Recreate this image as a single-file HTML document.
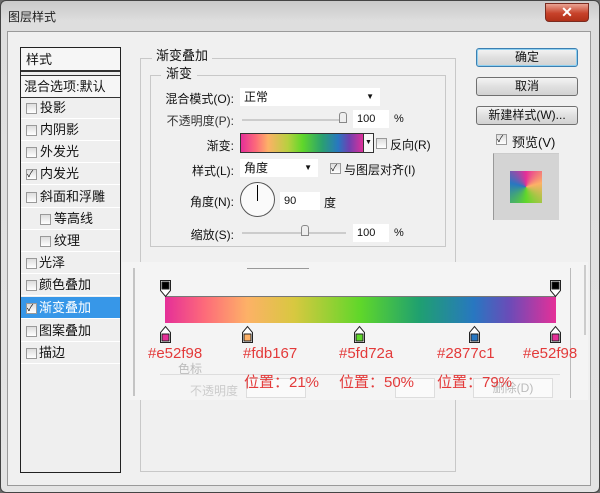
<!DOCTYPE html><html><head><meta charset="utf-8"><style>
*{margin:0;padding:0;box-sizing:border-box}
body{width:600px;height:493px;overflow:hidden;background:#6a6a6a;font-family:"Liberation Sans","Noto Sans CJK SC",sans-serif;font-size:12px;color:#111;position:relative}
.a{position:absolute}
.cb{position:absolute;width:11px;height:11px;border:1px solid #999;background:linear-gradient(#ddd,#fff)}
.btn{position:absolute;left:476px;width:102px;height:19px;border:1px solid #707070;border-radius:3px;background:linear-gradient(#f4f4f4,#e0e0e0 50%,#d2d2d2);text-align:center;line-height:17px;font-size:12px}
.row{position:absolute;left:21px;width:99px;height:22px;border-bottom:1px solid #fff;line-height:22px;font-size:13px}
.field{position:absolute;background:#fff;height:18px;line-height:18px;padding-left:4px;font-size:11px}
.lbl{position:absolute;text-align:right;font-size:12px}
.red{position:absolute;color:#e33a3a;font-size:15px;font-family:"Liberation Sans","Noto Sans CJK SC",sans-serif}
</style></head><body>
<div class="a" style="left:0;top:0;width:600px;height:493px;border-radius:6px;background:linear-gradient(#c9c9c9,#dedede 20px,#e4e4e4);border:1px solid #444"></div>
<div class="a" style="left:8px;top:8px;font-size:12px;color:#222">图层样式</div>
<div class="a" style="left:545px;top:3px;width:44px;height:19px;border-radius:0 0 4px 4px;background:linear-gradient(#e9a393,#c7422a 55%,#b03018);border:1px solid #7a2b20;color:#fff;text-align:center;font-weight:bold;line-height:17px;font-size:14px">✕</div>
<div class="a" style="left:7px;top:31px;width:584px;height:455px;background:#f0f0f0;border:1px solid #9a9a9a"></div>
<!-- left list -->
<div class="a" style="left:20px;top:47px;width:101px;height:426px;border:1px solid #222;background:#efefef"></div>
<div class="a" style="left:21px;top:48px;width:99px;height:24px;border-bottom:2px solid #333;background:#f6f6f6;line-height:23px;padding-left:5px;font-size:13px">样式</div>
<div class="a" style="left:21px;top:75px;width:99px;height:23px;border-bottom:1px solid #333;border-top:1px solid #333;background:#f6f6f6;line-height:22px;padding-left:3px;font-size:13px">混合选项:默认</div>
<div class="row" style="top:97px"><span class="cb" style="left:5px;top:6px"></span><span style="position:absolute;left:19px">投影</span></div>
<div class="row" style="top:119px"><span class="cb" style="left:5px;top:6px"></span><span style="position:absolute;left:19px">内阴影</span></div>
<div class="row" style="top:141px"><span class="cb" style="left:5px;top:6px"></span><span style="position:absolute;left:19px">外发光</span></div>
<div class="row" style="top:163px"><span class="cb" style="left:5px;top:6px;font-size:9px;line-height:9px">✓</span><span style="position:absolute;left:19px">内发光</span></div>
<div class="row" style="top:186px"><span class="cb" style="left:5px;top:6px"></span><span style="position:absolute;left:19px">斜面和浮雕</span></div>
<div class="row" style="top:208px"><span class="cb" style="left:19px;top:6px"></span><span style="position:absolute;left:33px">等高线</span></div>
<div class="row" style="top:230px"><span class="cb" style="left:19px;top:6px"></span><span style="position:absolute;left:33px">纹理</span></div>
<div class="row" style="top:252px"><span class="cb" style="left:5px;top:6px"></span><span style="position:absolute;left:18px">光泽</span></div>
<div class="row" style="top:274px"><span class="cb" style="left:5px;top:6px"></span><span style="position:absolute;left:18px">颜色叠加</span></div>
<div class="row" style="top:297px;background:#3797e8;color:#fff"><span class="cb" style="left:5px;top:6px;font-size:9px;line-height:9px;color:#000">✓</span><span style="position:absolute;left:18px">渐变叠加</span></div>
<div class="row" style="top:320px"><span class="cb" style="left:5px;top:6px"></span><span style="position:absolute;left:18px">图案叠加</span></div>
<div class="row" style="top:342px"><span class="cb" style="left:5px;top:6px"></span><span style="position:absolute;left:18px">描边</span></div>
<!-- group boxes -->
<div class="a" style="left:140px;top:58px;width:316px;height:414px;border:1px solid #c8c8c8"></div>
<div class="a" style="left:152px;top:45px;background:#f0f0f0;padding:0 4px;font-size:13px">渐变叠加</div>
<div class="a" style="left:150px;top:75px;width:296px;height:172px;border:1px solid #c8c8c8"></div>
<div class="a" style="left:161px;top:63px;background:#f0f0f0;padding:0 5px;font-size:13px">渐变</div>
<div class="lbl" style="left:150px;top:90px;width:84px">混合模式(O):</div>
<div class="field" style="left:240px;top:88px;width:140px;font-size:12px">正常<span style="position:absolute;right:6px;top:0;font-size:8px">▼</span></div>
<div class="lbl" style="left:150px;top:112px;width:84px;color:#333">不透明度(P):</div>
<div class="a" style="left:242px;top:119px;width:104px;height:2px;background:#ccc"></div>
<div class="a" style="left:339px;top:112px;width:8px;height:11px;border:1px solid #888;border-radius:3px 3px 0 0;background:#eee"></div>
<div class="field" style="left:353px;top:110px;width:36px">100</div><div class="a" style="left:394px;top:113px;font-size:11px">%</div>
<div class="lbl" style="left:150px;top:137px;width:84px">渐变:</div>
<div class="a" style="left:240px;top:133px;width:125px;height:20px;border:1px solid #333;background:linear-gradient(90deg,#e52f98,#fd6a7a 12%,#fdb167 22%,#b8d040 38%,#5fd72a 50%,#2aa070 66%,#2877c1 79%,#7040b0 88%,#e52f98)"></div>
<div class="a" style="left:363px;top:133px;width:11px;height:20px;border:1px solid #333;background:#f8f8f8;font-size:7px;text-align:center;line-height:18px">▼</div>
<div class="cb" style="left:376px;top:138px"></div><div class="a" style="left:390px;top:136px">反向(R)</div>
<div class="lbl" style="left:150px;top:162px;width:84px">样式(L):</div>
<div class="field" style="left:240px;top:159px;width:78px;font-size:12px">角度<span style="position:absolute;right:6px;top:0;font-size:8px">▼</span></div>
<div class="cb" style="left:330px;top:163px;font-size:9px;line-height:9px">✓</div><div class="a" style="left:344px;top:161px">与图层对齐(I)</div>
<div class="lbl" style="left:150px;top:193px;width:84px">角度(N):</div>
<div class="a" style="left:240px;top:182px;width:35px;height:35px;border-radius:50%;border:1px solid #555;background:#fafafa"></div>
<div class="a" style="left:257px;top:185px;width:1px;height:16px;background:#000"></div>
<div class="field" style="left:280px;top:192px;width:40px">90</div><div class="a" style="left:324px;top:194px">度</div>
<div class="lbl" style="left:150px;top:226px;width:84px">缩放(S):</div>
<div class="a" style="left:242px;top:232px;width:104px;height:2px;background:#ccc"></div>
<div class="a" style="left:301px;top:225px;width:8px;height:11px;border:1px solid #888;border-radius:3px 3px 0 0;background:#eee"></div>
<div class="field" style="left:353px;top:224px;width:36px">100</div><div class="a" style="left:394px;top:227px;font-size:11px">%</div>
<!-- right buttons -->
<div class="btn" style="top:48px;border-color:#3c7fb1;box-shadow:0 0 0 1px #8fd0f0 inset">确定</div>
<div class="btn" style="top:77px">取消</div>
<div class="btn" style="top:106px">新建样式(W)...</div>
<div class="cb" style="left:496px;top:134px;font-size:9px;line-height:9px">✓</div><div class="a" style="left:512px;top:132px;font-size:13px">预览(V)</div>
<div class="a" style="left:493px;top:153px;width:66px;height:67px;background:#d4d4d4;border-left:1px solid #999;border-top:1px solid #ccc"></div>
<div class="a" style="left:510px;top:171px;width:32px;height:32px;background:conic-gradient(from 0deg,#e52f98,#fdb167 21%,#5fd72a 50%,#2877c1 79%,#e52f98)"></div>
<!-- overlay editor -->
<div class="a" style="left:122px;top:262px;width:466px;height:138px;background:#f4f4f4"></div>
<div class="a" style="left:133px;top:268px;width:2px;height:128px;background:#c4c4c4"></div>
<div class="a" style="left:570px;top:268px;width:1px;height:130px;background:#bbb"></div>
<div class="a" style="left:584px;top:265px;width:2px;height:70px;background:#ccc"></div>
<div class="a" style="left:247px;top:268px;width:62px;height:1px;background:#999"></div>
<div class="a" style="left:165px;top:296px;width:391px;height:27px;border-top:1px solid #777;background:linear-gradient(90deg,#e52f98,#fd6a7a 10%,#fdb167 21%,#d8c840 33%,#5fd72a 50%,#1fa070 65%,#2877c1 79%,#6a4cb8 88%,#e52f98)"></div>
<svg class="a" style="left:0;top:0" width="600" height="493">
<g stroke="#222" stroke-width="1">
<path d="M160.5 280.5h10v10l-5 6l-5-6z" fill="#fff"/><rect x="162" y="282" width="7" height="7" fill="#000"/>
<path d="M550.5 280.5h10v10l-5 6l-5-6z" fill="#fff"/><rect x="552" y="282" width="7" height="7" fill="#000"/>
<path d="M160.5 342.5v-10l5-6l5 6v10z" fill="#fff"/><rect x="162" y="334" width="7" height="7" fill="#e52f98"/>
<path d="M242.5 342.5v-10l5-6l5 6v10z" fill="#fff"/><rect x="244" y="334" width="7" height="7" fill="#fdb167"/>
<path d="M354.5 342.5v-10l5-6l5 6v10z" fill="#fff"/><rect x="356" y="334" width="7" height="7" fill="#5fd72a"/>
<path d="M469.5 342.5v-10l5-6l5 6v10z" fill="#fff"/><rect x="471" y="334" width="7" height="7" fill="#2877c1"/>
<path d="M550.5 342.5v-10l5-6l5 6v10z" fill="#fff"/><rect x="552" y="334" width="7" height="7" fill="#e52f98"/>
</g></svg>
<div class="a" style="left:178px;top:360px;color:#bbb;font-size:12px">色标</div>
<div class="a" style="left:160px;top:374px;width:400px;height:1px;background:#ddd"></div>
<div class="a" style="left:190px;top:382px;color:#ccc;font-size:12px">不透明度</div>
<div class="a" style="left:246px;top:378px;width:60px;height:20px;border:1px solid #ddd;background:#fafafa"></div>
<div class="a" style="left:395px;top:378px;width:40px;height:20px;border:1px solid #ddd;background:#fafafa"></div>
<div class="a" style="left:473px;top:378px;width:80px;height:20px;border:1px solid #ddd;background:#fafafa;color:#bbb;text-align:center;line-height:18px">删除(D)</div>
<div class="red" style="left:148px;top:345px">#e52f98</div>
<div class="red" style="left:243px;top:345px">#fdb167</div>
<div class="red" style="left:339px;top:345px">#5fd72a</div>
<div class="red" style="left:437px;top:345px">#2877c1</div>
<div class="red" style="left:523px;top:345px">#e52f98</div>
<div class="red" style="left:244px;top:371px">位置：21%</div>
<div class="red" style="left:339px;top:371px">位置：50%</div>
<div class="red" style="left:437px;top:371px">位置：79%</div>
</body></html>
